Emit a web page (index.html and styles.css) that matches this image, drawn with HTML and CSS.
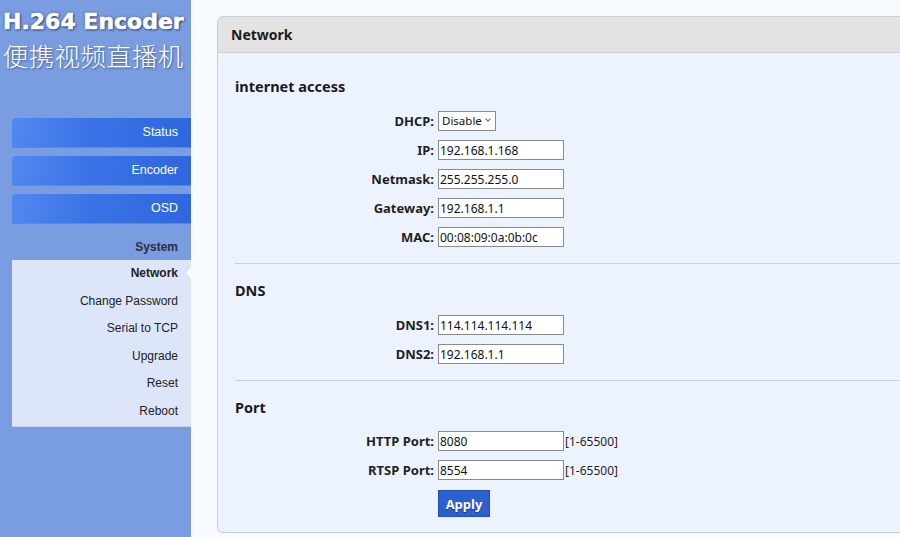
FILE: index.html
```html
<!DOCTYPE html>
<html lang="en">
<head>
<meta charset="utf-8">
<title>H.264 Encoder - Network</title>
<link rel="stylesheet" href="styles.css">
</head>
<body>
<div class="layout">
  <aside class="sidebar">
    <div class="logo">
      <div class="logo-title">H.264 Encoder</div>
      <div class="logo-sub">便携视频直播机</div>
    </div>
    <nav class="nav">
      <a class="nav-btn">Status</a>
      <a class="nav-btn">Encoder</a>
      <a class="nav-btn">OSD</a>
      <div class="nav-group">System</div>
      <ul class="submenu">
        <li class="active">Network</li>
        <li>Change Password</li>
        <li>Serial to TCP</li>
        <li>Upgrade</li>
        <li>Reset</li>
        <li>Reboot</li>
      </ul>
    </nav>
  </aside>
  <main class="main">
    <section class="panel">
      <div class="panel-head">Network</div>
      <div class="panel-body">
        <h3 class="sec-title">internet access</h3>
        <div class="form">
          <label>DHCP:</label>
          <span class="select-wrap"><select><option>Disable</option><option>Enable</option></select></span>
          <label>IP:</label><input type="text" value="192.168.1.168">
          <label>Netmask:</label><input type="text" value="255.255.255.0">
          <label>Gateway:</label><input type="text" value="192.168.1.1">
          <label>MAC:</label><input type="text" value="00:08:09:0a:0b:0c">
        </div>
        <hr class="sep">
        <h3 class="sec-title">DNS</h3>
        <div class="form">
          <label>DNS1:</label><input type="text" value="114.114.114.114">
          <label>DNS2:</label><input type="text" value="192.168.1.1">
        </div>
        <hr class="sep">
        <h3 class="sec-title port">Port</h3>
        <div class="form">
          <label>HTTP Port:</label><span class="with-hint"><input type="text" value="8080"><span class="hint">[1-65500]</span></span>
          <label>RTSP Port:</label><span class="with-hint"><input type="text" value="8554"><span class="hint">[1-65500]</span></span>
          <span></span><button class="apply">Apply</button>
        </div>
      </div>
    </section>
  </main>
</div>
</body>
</html>
```
FILE: styles.css
```css
html, body {
  margin: 0;
  padding: 0;
  height: 100%;
}
body {
  background: #f7fbff;
  font-family: "Liberation Sans", Arial, sans-serif;
  overflow: hidden;
}
.layout {
  display: flex;
  height: 537px;
}
.sidebar {
  width: 191px;
  flex: none;
  background: #7a9ce0;
  display: flex;
  flex-direction: column;
}
.logo {
  padding: 8px 0 0 3px;
  height: 112px;
  box-sizing: border-box;
}
.logo-title {
  font-family: "DejaVu Sans", Verdana, sans-serif;
  font-weight: bold;
  font-size: 22px;
  line-height: 28px;
  color: #fff;
  letter-spacing: 0;
  -webkit-text-stroke: 0.6px #fff;
  text-shadow: 1px 1px 2px #1d2f66, 0 0 3px rgba(20,40,100,0.6);
}
.logo-sub {
  margin-top: 2px;
  font-family: "Noto Sans CJK SC", sans-serif;
  font-weight: 300;
  font-size: 25.5px;
  line-height: 34px;
  color: #fff;
  letter-spacing: 0.3px;
  text-shadow: 1px 1px 2px rgba(30,50,110,0.6);
}
.nav {
  display: flex;
  flex-direction: column;
  padding-top: 6px;
}
.nav-btn {
  display: block;
  margin-left: 12px;
  height: 29px;
  line-height: 29px;
  margin-bottom: 9px;
  padding-right: 13px;
  text-align: right;
  color: #fff;
  font-size: 12.5px;
  background: linear-gradient(100deg, #5288f0 0%, #3a72e6 45%, #2f66de 100%);
  border-radius: 4px 0 0 0;
  box-shadow: 0 1px 0 rgba(40,70,150,0.25);
}
.nav-group {
  margin-top: 2px;
  height: 26px;
  line-height: 26px;
  padding-right: 13px;
  text-align: right;
  font-weight: bold;
  font-size: 12px;
  color: #2b2f3a;
}
.submenu {
  list-style: none;
  margin: 0 0 0 12px;
  padding: 0 0 1px 0;
  background: #dde5f8;
  border-bottom: 1px solid #c9d4ee;
}
.submenu li {
  position: relative;
  height: 27.5px;
  line-height: 26px;
  padding-right: 13px;
  text-align: right;
  font-size: 12px;
  color: #222;
}
.submenu li.active {
  font-weight: bold;
}
.submenu li.active::after {
  content: "";
  position: absolute;
  right: 0;
  top: 8px;
  border-style: solid;
  border-width: 5px 5px 5px 0;
  border-color: transparent #ffffff transparent transparent;
}
.main {
  flex: 1;
  padding: 16px 0 0 26px;
  overflow: hidden;
}
.panel {
  margin-right: -12px;
  border: 1px solid #c6cdd9;
  border-radius: 6px;
  background: #edf3fe;
  height: 517px;
  box-sizing: border-box;
  overflow: hidden;
}
.panel-head {
  height: 35px;
  line-height: 35px;
  padding-left: 13px;
  background: #e3e3e3;
  border-bottom: 1px solid #cdd0dc;
  font-family: "Noto Sans", "Open Sans", sans-serif;
  font-weight: bold;
  font-size: 14px;
  color: #1a1a1a;
}
.panel-body {
  padding: 24px 0 0 17px;
  font-family: "Noto Sans", "Open Sans", sans-serif;
}
.sec-title {
  margin: 0 0 16px 0;
  font-size: 14.5px;
  line-height: 18px;
  font-weight: bold;
  color: #1a1a1a;
}
.sec-title.port {
  margin-bottom: 15px;
}
.form {
  display: grid;
  grid-template-columns: 199px auto;
  grid-auto-rows: 20px;
  column-gap: 4px;
  row-gap: 9px;
  align-items: center;
  justify-items: start;
}
.form label {
  justify-self: end;
  font-size: 13px;
  font-weight: bold;
  color: #1f1f1f;
  line-height: 20px;
}
.form input {
  display: block;
  width: 126px;
  height: 20px;
  box-sizing: border-box;
  border: 1px solid #8a8a8a;
  background: #fff;
  padding: 0 1px;
  margin: 0;
  font-family: "Noto Sans", "Open Sans", sans-serif;
  font-size: 12px;
  color: #111;
}
.select-wrap {
  position: relative;
  display: block;
  width: 58px;
  height: 20px;
}
.select-wrap select {
  appearance: none;
  -webkit-appearance: none;
  display: block;
  width: 58px;
  height: 20px;
  box-sizing: border-box;
  border: 1px solid #8a8a8a;
  background: #fff;
  padding: 0 0 0 3px;
  margin: 0;
  line-height: 18px;
  font-family: "Noto Sans", "Open Sans", sans-serif;
  font-size: 11.5px;
  color: #111;
  border-radius: 0;
}
.select-wrap::after {
  content: "";
  position: absolute;
  right: 6px;
  top: 6px;
  width: 3px;
  height: 3px;
  border-right: 1px solid #666;
  border-bottom: 1px solid #666;
  transform: rotate(45deg);
  pointer-events: none;
}
.with-hint {
  display: flex;
  align-items: center;
}
.hint {
  font-size: 12px;
  color: #1f1f1f;
  margin-left: 1px;
}
.sep {
  border: 0;
  border-top: 1px solid #c9d1dd;
  margin: 16px 0 17px 0;
}
.apply {
  display: block;
  align-self: start;
  width: 52px;
  height: 27px;
  margin: 1px 0 0 0;
  padding: 0;
  border: 1px solid #2150b8;
  background: #2c5fd0;
  color: #fff;
  font-family: "Noto Sans", "Open Sans", sans-serif;
  font-weight: bold;
  font-size: 13px;
  text-shadow: 0 1px 1px rgba(0,0,0,0.4);
}
```
